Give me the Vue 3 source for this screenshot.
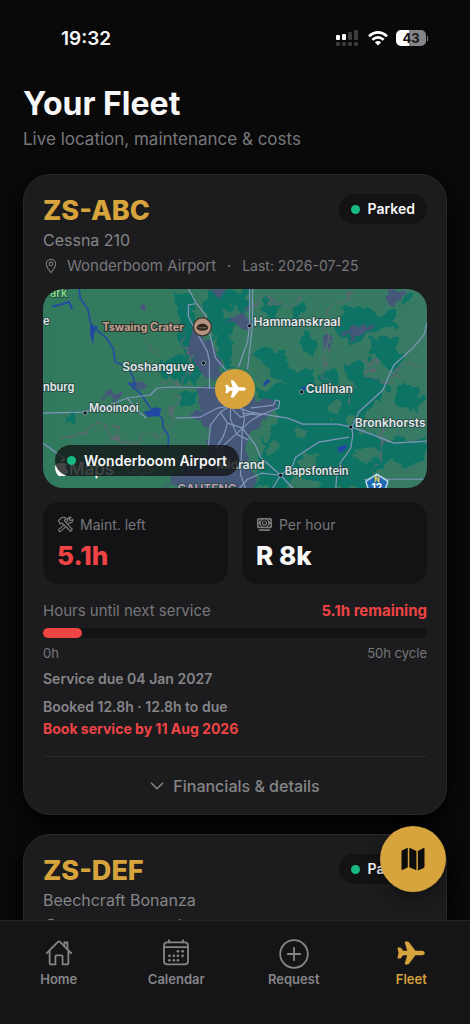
<script setup>
import { ref } from 'vue'

const aircraft = [
  {
    reg: 'ZS-ABC',
    model: 'Cessna 210',
    status: 'Parked',
    airport: 'Wonderboom Airport',
    last: '2026-07-25',
    service: {
      left: '5.1h',
      rate: 'R 8k',
      used: 5.1,
      cycle: 50,
      due: 'Service due 04 Jan 2027',
      booked: 'Booked 12.8h · 12.8h to due',
      deadline: 'Book service by 11 Aug 2026',
    },
  },
  { reg: 'ZS-DEF', model: 'Beechcraft Bonanza', status: 'Parked', airport: 'Wonderboom Airport' },
]

const tabs = [
  { id: 'home', label: 'Home' },
  { id: 'calendar', label: 'Calendar' },
  { id: 'request', label: 'Request' },
  { id: 'fleet', label: 'Fleet' },
]
const active = ref('fleet')

const plane =
  'M24.6 9.7H18.4L12 1.2Q11.4.4 10.4.4H8.6Q7.5.4 7.8 1.5L10.2 9.7H6.2L4 7Q3.6 6.4 2.9 6.4H1.3Q.3 6.4.5 7.3L1.6 12 .5 16.7Q.3 17.6 1.3 17.6H2.9Q3.6 17.6 4 17L6.2 14.3H10.2L7.8 22.5Q7.5 23.6 8.6 23.6H10.4Q11.4 23.6 12 22.8L18.4 14.3H24.6Q27.8 14 27.8 12T24.6 9.7Z'

const roads = [
  '145,0 152,13 162,26 169,56 172,69 182,81 190,90',
  '152,15 145,16 145,28 151,39 164,63 166,73 166,100',
  '0,124 40,123 64,117 84,109 107,106 114,99 130,98 172,99',
  '84,109 97,124 103,129',
  '132,129 157,128 174,119 185,117',
  '0,154 14,164 40,182',
  '206,0 206,36 204,53 195,78',
  '209,0 209,36 204,80',
  '383,34 380,46 369,59 350,76 344,89 339,101 315,123 308,138 309,146 307,159 297,173 293,186 292,199',
  '196,119 207,123 244,129 259,135 294,135 308,138 330,146 350,154 383,152',
  '305,148 275,153 252,168 249,176 237,186 229,199',
  '199,139 212,156 217,168 237,186 249,199',
  '237,186 218,184 204,190 196,199',
  '320,190 383,190',
  '207,119 230,116 232,111 236,112 235,119 217,126 200,124',
  '199,139 198,160 197,185 202,199',
  '165,156 167,136 177,123 187,117 199,120 201,130 199,139 186,151 176,160',
  '177,123 184,134 199,139 208,131 217,126',
  '184,134 180,147 172,160',
  '187,117 187,130 193,145 205,151',
  '189,120 197,128 211,124',
]

const teal = [
  '168,0 205,0 200,34 186,48 190,80 176,74 170,42 160,18',
  '132,4 146,8 152,30 166,62 158,72 140,64 132,48 140,30',
  '210,100 262,92 300,104 330,100 330,120 300,136 340,150 383,148 383,172 344,176 322,199 212,199 220,150 240,128',
  '302,18 322,16 336,24 352,20 352,36 330,42 318,54 300,50 292,40',
  '262,44 276,52 270,66 256,62',
  '214,66 232,60 246,74 266,82 272,96 240,94 224,86',
  '300,74 320,70 326,90 344,96 336,112 310,104',
  '326,50 350,54 364,66 352,84 330,72',
  '244,18 262,14 266,26 250,28',
  '226,14 238,18 230,30 216,26',
  '354,92 378,98 370,124 348,118',
  '276,84 290,80 294,92 280,94',
  '120,70 150,66 160,84 150,96 136,88 118,86',
  '137,106 152,102 150,116 138,118',
  '24,127 34,126 33,133 26,132',
  '356,8 366,4 370,16 358,20',
  '146,166 162,170 158,184 144,180',
]

const olive = [
  '280,118 296,114 300,124 286,128',
  '250,140 268,142 262,150 248,148',
  '312,164 330,158 336,168 318,174',
  '262,164 276,168 268,178 254,174',
  '226,150 236,156 232,166 222,160',
  '340,176 364,178 352,188 338,186',
  '176,20 190,14 194,28 182,32',
  '252,186 280,190 276,199 250,199',
]

const urban = [
  '151,39 166,50 176,74 186,84 166,92 146,64',
  '148,100 168,96 184,104 214,112 236,110 236,122 220,132 208,142 206,160 212,199 120,199 138,178 160,166 166,140 148,124 156,118',
  '187,26 206,20 208,40 192,38',
  '164,2 184,0 176,10',
  '300,42 318,34 332,36 318,46 302,48',
  '346,2 356,4 352,18 344,14',
  '96,18 102,16 102,24 96,24',
  '280,48 288,50 286,58 280,56',
  '60,108 78,102 74,112 62,114',
  '90,92 98,88 104,98 94,102',
]

const borders = [
  '20,150 46,142 60,132 68,142 72,150 92,156 104,144 124,142 130,126 136,110 130,100',
  '206,16 226,12 240,18 254,14 256,0',
  '306,0 304,10 286,18 282,26 284,50 282,90',
  '105,50 108,62 118,66',
  '140,40 136,56 148,66 142,90 118,92',
  '318,70 330,74 324,90 340,92 360,80 383,74',
  '340,126 340,150 334,170 330,199',
  '310,116 306,104 314,100',
]

const towns = [
  { name: 'Soshanguve', x: 79, y: 82, px: 160, py: 74, size: 12 },
  { name: 'Hammanskraal', x: 210, y: 37, px: 206, py: 37, size: 12 },
  { name: 'Cullinan', x: 262, y: 104, px: 258, py: 103, size: 12 },
  { name: 'Bronkhorsts', x: 311, y: 138, px: 307, py: 138, size: 12 },
  { name: 'Mooinooi', x: 46, y: 123, px: 42, py: 124, size: 11 },
  { name: 'Bapsfontein', x: 241, y: 186, px: 237, py: 186, size: 11 },
]
</script>

<template>
  <div class="app">
    <div class="status-bar">
      <time class="clock">19:32</time>
      <div class="indicators">
        <svg class="signal" viewBox="0 0 24 16" aria-hidden="true">
          <g fill="#fff"><rect x="0" y="5" width="4" height="5" rx="1" /><rect x="6" y="4" width="4" height="6" rx="1" /></g>
          <g fill="#3c3c3e">
            <rect x="12" y="2" width="4" height="8" rx="1" /><rect x="18" y="0" width="4" height="10" rx="1" />
            <rect v-for="i in 4" :key="i" :x="(i - 1) * 6" y="12" width="4" height="4" rx="1.4" />
          </g>
        </svg>
        <svg class="wifi" viewBox="0 0 20 15" aria-hidden="true">
          <g fill="none" stroke="#fff" stroke-width="2.6"><path d="M1 5.2Q10-2.3 19 5.2" /><path d="M4.3 8.8Q10 4 15.7 8.8" /></g>
          <path d="M6.9 11.2Q10 8.8 13.1 11.2L10 14.6Z" fill="#fff" />
        </svg>
        <div class="battery"><span class="cell">43</span><span class="nub"></span></div>
      </div>
    </div>

    <main class="content">
      <header class="heading">
        <h1>Your Fleet</h1>
        <p>Live location, maintenance &amp; costs</p>
      </header>

      <article v-for="a in aircraft" :key="a.reg" class="card">
        <div class="card-top">
          <div>
            <h2>{{ a.reg }}</h2>
            <p class="model">{{ a.model }}</p>
          </div>
          <span class="badge"><i class="dot"></i>{{ a.status }}</span>
        </div>
        <p class="place">
          <svg viewBox="0 0 16 18" aria-hidden="true"><g fill="none" stroke="currentColor" stroke-width="1.3"><path d="M8 1.5C4.9 1.5 2.7 3.8 2.7 6.7 2.7 10.2 5.5 13.5 8 16.4 10.5 13.5 13.3 10.2 13.3 6.7 13.3 3.8 11.1 1.5 8 1.5Z" /><circle cx="8" cy="6.8" r="2.1" /></g></svg>
          <span>{{ a.airport }}</span>
          <template v-if="a.last"><span class="sep">·</span><span class="last">Last: {{ a.last }}</span></template>
        </p>

        <template v-if="a.service">
          <div class="map">
            <svg class="terrain" viewBox="0 0 383 199" preserveAspectRatio="xMidYMid slice" role="img" aria-label="Map around Wonderboom Airport">
              <defs>
                <filter id="ragged" x="-10%" y="-10%" width="120%" height="120%">
                  <feTurbulence type="fractalNoise" baseFrequency="0.07" numOctaves="3" seed="4" result="n" />
                  <feDisplacementMap in="SourceGraphic" in2="n" scale="20" xChannelSelector="R" yChannelSelector="G" />
                </filter>
                <linearGradient id="land"><stop offset="0" stop-color="#327a5d" /><stop offset="1" stop-color="#387a64" /></linearGradient>
              </defs>
              <rect width="383" height="199" fill="url(#land)" />
              <g filter="url(#ragged)">
                <polygon v-for="p in teal" :key="p" :points="p" fill="#087365" />
                <polygon v-for="p in olive" :key="p" :points="p" fill="#347963" />
                <polygon v-for="p in urban" :key="p" :points="p" fill="#455879" />
                <polyline v-for="p in borders" :key="p" :points="p" fill="none" stroke="#5d6870" stroke-width="1.4" />
              </g>
              <g fill="none" stroke="#234ba0" stroke-width="1.6">
                <polyline points="36,0 37,9 45,21 47,33 50,38 64,50 70,60 72,73 84,78 90,88 92,96 85,94 97,104 107,119 119,129 120,139 125,146 125,160" />
                <polyline points="9,18 20,15 26,13 29,20" stroke-width="2" />
              </g>
              <g fill="#2148a3">
                <path d="M47 36 55 38 51 44 50 56 47 46ZM100 123 108 121 111 118 118 120 116 127 105 128ZM293 158 304 155 301 161 296 164ZM219 95 224 90 227 92 221 97ZM257 98 262 97 261 102Z" />
              </g>
              <polyline v-for="p in roads" :key="p" :points="p" fill="none" stroke="#8295bc" stroke-width="1.2" stroke-linejoin="round" />
              <g class="labels">
                <g v-for="t in towns" :key="t.name">
                  <circle :cx="t.px" :cy="t.py" r="2" fill="#080c12" stroke="#9caabd" stroke-width=".8" />
                  <text :x="t.x" :y="t.y" :font-size="t.size">{{ t.name }}</text>
                </g>
                <text x="0" y="102" font-size="11">nburg</text>
                <text x="0" y="36" font-size="11">e</text>
                <text x="7" y="8" font-size="11" class="park">ark</text>
                <text x="173" y="180" font-size="12">Midrand</text>
                <text x="134" y="204" font-size="12" class="province">GAUTENG</text>
                <text x="59" y="42" font-size="11" class="sight">Tswaing Crater</text>
              </g>
              <circle cx="159" cy="38" r="9" fill="#b49380" stroke="#3c342f" stroke-width="1.4" />
              <path d="M153 39Q154 36 157 35H161Q164 36 165 39 164 42 159 42T153 39Z" fill="#30261f" />
              <path d="M155 39H163" stroke="#84695a" />
              <path d="M333 185 344 192 340 205H326L322 192Z" fill="#1f69b5" stroke="#b9d6e7" stroke-width="1.5" stroke-linejoin="round" />
              <text x="333" y="193" class="shield-n">N</text>
              <text x="333" y="202" class="shield-num">12</text>
              <path d="M22 174Q20 173 18 174 12 173 12 179 13 186 17 187 19 186 21 187 25 185 25 181 21 179 24 175ZM18 173Q18 170 22 168 22 172 18 173Z" fill="#fff" />
              <text x="26" y="186" class="brand">Maps</text>
              <text x="83" y="184" class="legal">Legal</text>
            </svg>
            <span class="marker"><svg viewBox="0 0 28 24" aria-hidden="true"><path :d="plane" fill="#fff" /></svg></span>
            <span class="map-chip"><i class="dot"></i>{{ a.airport }}</span>
          </div>

          <div class="stats">
            <div class="stat">
              <p class="stat-label">
                <svg viewBox="0 0 18 18" aria-hidden="true"><g fill="none" stroke="currentColor" stroke-width="1.3" stroke-linejoin="round"><path d="M1.5 4.8 4.8 1.8Q7.5.8 10 2.8L7.8 4.5 8.6 6 16.2 14.2 14.4 16.2 6.2 8.2 4.7 7.4 3.4 8.5Z" /><path d="M9.8 6.6 11.2 5.2Q10.5 2.5 13 1.5L14.8 1.3 13 3.4 14.6 5 16.8 3.3Q17 7.6 13.2 7.2L11.6 8.5M7.4 9.4 2 14.2Q1.2 15.5 2.4 16.3 3.6 16.8 4.4 15.8L9.4 11.2" /></g></svg>
                Maint. left
              </p>
              <p class="stat-value danger">{{ a.service.left }}</p>
            </div>
            <div class="stat">
              <p class="stat-label">
                <svg viewBox="0 0 18 18" aria-hidden="true"><rect x="1" y="2" width="16" height="11" rx="2" fill="currentColor" /><path d="M2.3 14H15.7Q15 16 13 16H5Q3 16 2.3 14Z" fill="currentColor" /><g fill="none" stroke="#131315" stroke-width="1.1"><circle cx="9" cy="7.5" r="3.3" /><circle cx="9" cy="7.5" r="1" /><path d="M2.4 5.6Q4.4 5.4 4.7 3.4M15.6 5.6Q13.6 5.4 13.3 3.4M2.4 9.4Q4.4 9.6 4.7 11.6M15.6 9.4Q13.6 9.6 13.3 11.6" /></g></svg>
                Per hour
              </p>
              <p class="stat-value">{{ a.service.rate }}</p>
            </div>
          </div>

          <div class="row hours"><span>Hours until next service</span><strong>{{ a.service.left }} remaining</strong></div>
          <div class="track"><div class="fill" :style="{ width: (a.service.used / a.service.cycle) * 100 + '%' }"></div></div>
          <div class="row scale"><span>0h</span><span>{{ a.service.cycle }}h cycle</span></div>
          <p class="note due">{{ a.service.due }}</p>
          <p class="note">{{ a.service.booked }}</p>
          <p class="note danger">{{ a.service.deadline }}</p>
          <button class="details" type="button">
            <svg viewBox="0 0 14 14" aria-hidden="true"><path d="M1.5 4.2 7 9.8 12.5 4.2" fill="none" stroke="currentColor" stroke-width="1.6" stroke-linecap="round" stroke-linejoin="round" /></svg>
            Financials &amp; details
          </button>
        </template>
      </article>
    </main>

    <div class="dock">
      <button class="fab" type="button" aria-label="Open fleet map">
        <svg viewBox="0 0 24 24" aria-hidden="true"><path d="M.5 4.6Q.5 3.7 1.3 3.2L6.8.8V20.3L1.8 22.8Q.5 23.3.5 22ZM8.3.8 15.4 4V23.2L8.3 20.2ZM16.9 4 22.2 1.2Q23.5.8 23.5 2V19.6Q23.5 20.5 22.7 20.9L16.9 23.5Z" fill="#0d0d0e" /></svg>
      </button>
      <nav class="tabs" aria-label="Main">
        <a v-for="t in tabs" :key="t.id" :href="'#' + t.id" :class="{ active: active === t.id }" @click="active = t.id">
          <svg v-if="t.id === 'home'" viewBox="-1 -1 32 32" aria-hidden="true"><g fill="none" stroke="currentColor" stroke-width="1.9" stroke-linecap="round" stroke-linejoin="round"><path d="M2 15.2 13.9 3.2Q15 2.2 16.1 3.2L28 15.2M5 12.4V25.3Q5 27.2 6.9 27.2H11.2V18.7Q11.2 17.5 12.4 17.5H17.6Q18.8 17.5 18.8 18.7V27.2H23.1Q25 27.2 25 25.3V12.4" /><path d="M20.7 7.6V3.8H24V11" /></g></svg>
          <svg v-else-if="t.id === 'calendar'" viewBox="-1 -1 32 32" aria-hidden="true"><g fill="none" stroke="currentColor" stroke-width="1.9" stroke-linecap="round"><rect x="2.2" y="3.7" width="25.6" height="23.5" rx="3.4" /><path d="M2.2 8.8H27.8M7.5 1.4V3.7M22.5 1.4V3.7" /></g><g fill="currentColor"><circle v-for="c in [[17,13.2],[22,13.2],[8,18],[12.7,18],[17,18],[22,18],[8,22.8],[12.7,22.8],[17,22.8]]" :key="c.join()" :cx="c[0]" :cy="c[1]" r="1.4" /></g></svg>
          <svg v-else-if="t.id === 'request'" viewBox="0 0 30 30" aria-hidden="true"><g fill="none" stroke="currentColor" stroke-width="1.8" stroke-linecap="round"><circle cx="15" cy="16" r="13.8" /><path d="M15 9.8V22.2M8.8 16H21.2" /></g></svg>
          <svg v-else viewBox="-1 -3 30 30" aria-hidden="true"><path :d="plane" fill="currentColor" /></svg>
          <span>{{ t.label }}</span>
        </a>
      </nav>
    </div>
  </div>
</template>

<style>
body {
  margin: 0;
  background: #09090a;
}
</style>

<style scoped>
.app {
  height: 100vh;
  display: flex;
  flex-direction: column;
  overflow: hidden;
  background: #09090a;
  color: #f7f7f8;
  font-family: Inter, "Liberation Sans", sans-serif;
}
h1, h2, p {
  margin: 0;
}
svg {
  flex: none;
}
.status-bar {
  flex: none;
  display: flex;
  justify-content: space-between;
  align-items: center;
  height: 76px;
  padding: 0 42px 0 61px;
}
.clock {
  font-size: 19px;
  font-weight: 600;
}
.indicators {
  display: flex;
  align-items: center;
  gap: 8px;
}
.signal {
  width: 24px;
  height: 16px;
}
.wifi {
  width: 20px;
  height: 15px;
}
.battery {
  display: flex;
  align-items: center;
  gap: 1px;
}
.cell {
  width: 30px;
  line-height: 16px;
  border-radius: 5px;
  background: linear-gradient(90deg, #fff 43%, #858587 43%);
  color: #161617;
  font-size: 13px;
  font-weight: 700;
  text-align: center;
}
.nub {
  width: 1px;
  height: 5px;
  background: #77777a;
}
.content {
  flex: 1;
  min-height: 0;
  overflow-y: auto;
  scrollbar-width: none;
  padding: 0 23px;
}
.heading {
  padding: 8px 0 20px;
}
h1 {
  font-size: 32px;
  line-height: 40px;
  font-weight: 700;
}
.heading p {
  color: #77777a;
  font-size: 17px;
  line-height: 30px;
}
.card {
  margin-bottom: 19px;
  padding: 19px 19px 0;
  border: 1px solid #29292b;
  border-radius: 27px;
  background: #1c1c1e;
  box-shadow: 0 8px 20px #000;
}
.card-top {
  display: flex;
  justify-content: space-between;
  align-items: flex-start;
}
h2 {
  color: #d6a33c;
  font-size: 27px;
  line-height: 34px;
  font-weight: 800;
}
.model {
  color: #858588;
  font-size: 16px;
  line-height: 24px;
}
.badge {
  display: flex;
  align-items: center;
  gap: 8px;
  padding: 0 12px;
  border-radius: 16px;
  background: #131315;
  font-size: 14px;
  line-height: 30px;
  font-weight: 600;
}
.dot {
  width: 9px;
  height: 9px;
  border-radius: 50%;
  background: #16b981;
}
.place {
  display: flex;
  align-items: center;
  gap: 8px;
  margin: 4px 0 13px;
  color: #77777a;
  font-size: 15px;
  line-height: 20px;
}
.place svg {
  width: 16px;
  height: 16px;
}
.last {
  font-size: 14px;
}
.sep {
  width: 10px;
  text-align: center;
}
.map {
  position: relative;
  height: 199px;
  overflow: hidden;
  border-radius: 20px;
}
.terrain {
  display: block;
  width: 100%;
  height: 100%;
}
.labels text {
  fill: #e2e8ec;
  font-weight: 600;
  paint-order: stroke;
  stroke: #24443f;
  stroke-width: 1.5px;
}
.labels .park {
  fill: #80df88;
}
.labels .province {
  fill: #c0a3b6;
}
.labels .sight {
  fill: #c0a18f;
  font-weight: 700;
  stroke: #2d332d;
  stroke-width: 2px;
}
.shield-n,
.shield-num {
  fill: #e8d24e;
  font-size: 7px;
  font-weight: 700;
  text-anchor: middle;
}
.shield-num {
  fill: #fff;
  font-size: 10px;
}
.brand {
  fill: #fff;
  font-size: 17px;
  font-weight: 500;
}
.legal {
  fill: #8fa4a0;
  font-size: 11px;
}
.marker {
  position: absolute;
  top: 50%;
  left: 50%;
  display: grid;
  place-items: center;
  width: 40px;
  height: 40px;
  margin: -20px;
  border-radius: 50%;
  background: #d6a33c;
}
.marker svg {
  width: 21px;
  height: 18px;
}
.map-chip {
  position: absolute;
  left: 12px;
  bottom: 12px;
  display: flex;
  align-items: center;
  gap: 8px;
  padding: 0 12px;
  border-radius: 16px;
  background: rgba(19, 21, 22, 0.8);
  font-size: 14px;
  line-height: 31px;
  font-weight: 600;
}
.stats {
  display: grid;
  grid-template-columns: 1fr 1fr;
  gap: 14px;
  margin-top: 14px;
}
.stat {
  padding: 12px 14px;
  border-radius: 16px;
  background: #131315;
}
.stat-label {
  display: flex;
  align-items: center;
  gap: 6px;
  color: #77777a;
  font-size: 14px;
  line-height: 21px;
}
.stat-label svg {
  width: 17px;
  height: 17px;
}
.stat-value {
  margin-top: 5px;
  font-size: 26px;
  line-height: 32px;
  font-weight: 800;
}
.danger,
.row strong {
  color: #ef4444;
}
.row {
  display: flex;
  justify-content: space-between;
  color: #77777a;
}
.hours {
  margin-top: 17px;
  font-size: 15px;
  line-height: 20px;
}
.hours strong {
  font-weight: 700;
}
.track {
  height: 10px;
  margin-top: 7px;
  border-radius: 5px;
  background: #131315;
}
.fill {
  height: 10px;
  border-radius: 5px;
  background: #ef4444;
}
.scale {
  margin-top: 6px;
  font-size: 13px;
  line-height: 18px;
}
.note {
  color: #858588;
  font-size: 14px;
  line-height: 22px;
  font-weight: 600;
}
.note.due {
  margin: 6px 0;
}
.note.danger {
  color: #ef4444;
  font-weight: 700;
}
.details {
  display: flex;
  justify-content: center;
  align-items: center;
  gap: 9px;
  width: 100%;
  height: 58px;
  margin-top: 16px;
  padding: 0;
  border: 0;
  border-top: 1px solid #29292b;
  background: none;
  color: #858588;
  font: 500 16px/22px Inter, "Liberation Sans", sans-serif;
}
.details svg {
  width: 14px;
  height: 14px;
}
.dock {
  position: relative;
  flex: none;
}
.fab {
  position: absolute;
  right: 24px;
  bottom: 132px;
  display: grid;
  place-items: center;
  width: 66px;
  height: 66px;
  padding: 0;
  border: 0;
  border-radius: 50%;
  background: #d6a33c;
  box-shadow: 0 6px 16px rgba(0, 0, 0, 0.35);
}
.fab svg {
  width: 24px;
  height: 24px;
}
.tabs {
  display: grid;
  grid-template-columns: repeat(4, 1fr);
  padding: 17px 0 35px;
  border-top: 1px solid #252527;
  background: #151517;
}
.tabs a {
  display: flex;
  flex-direction: column;
  align-items: center;
  gap: 2px;
  color: #858588;
  font-size: 13px;
  line-height: 19px;
  font-weight: 600;
  text-decoration: none;
}
.tabs a.active {
  color: #d6a33c;
}
.tabs svg {
  width: 30px;
  height: 30px;
  overflow: visible;
}
</style>
